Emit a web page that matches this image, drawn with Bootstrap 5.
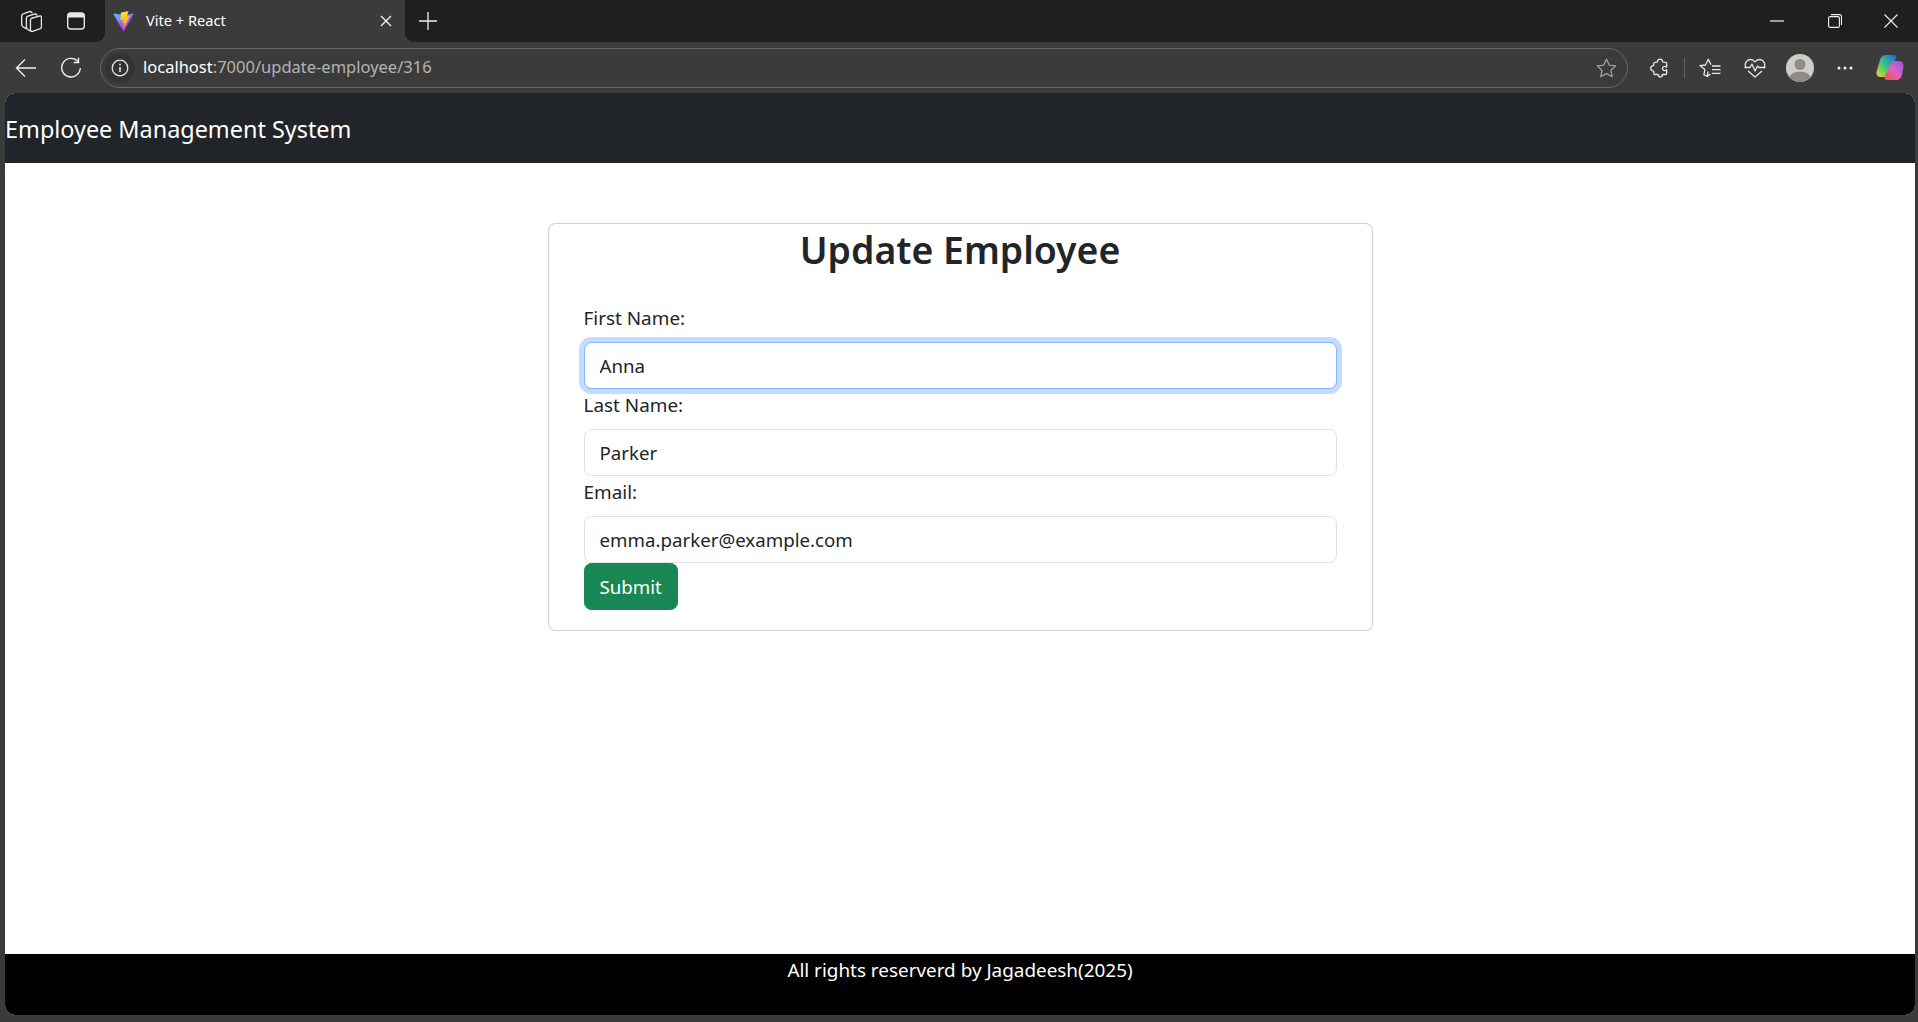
<!DOCTYPE html>
<html lang="en">
  <head>
    <meta charset="UTF-8" />
    <meta name="viewport" content="width=device-width, initial-scale=1.0" />
    <title>Vite + React</title>
    <link rel="stylesheet" href="https://cdn.jsdelivr.net/npm/bootstrap@5.3.2/dist/css/bootstrap.min.css" />
    <style>
      html { font-size: 20px; height: 100%; }
      body {
        --bs-body-font-size: 18.9px;
        font-family: "Noto Sans", "Open Sans", sans-serif;
        line-height: 30px;
        background: #3b3b3b;
        height: 100%;
        overflow: hidden;
      }

      /* browser window */
      .tab-strip { height: 42px; background: #3b3b3b; line-height: 1.5; }
      .strip-left { width: 105px; padding-left: 8px; background: #1f1f1f; border-bottom-right-radius: 9px; }
      .strip-right { background: #1f1f1f; border-bottom-left-radius: 9px; }
      .browser-tab { width: 300px; padding-left: 8px; background: #3b3b3b; border-radius: 9px 9px 0 0; color: #fff; font-size: 14.6px; }
      .tab-title { margin-left: 12px; }
      .tab-close { margin-right: 13px; }
      .slot { width: 45px; height: 42px; flex: none; }
      .win-slot { width: 58px; height: 40px; flex: none; }
      .win-slot-end { width: 54px; }
      .tool-bar { height: 51px; background: #3b3b3b; padding: 0 6px 0 3px; line-height: 1.5; }
      .address-bar {
        height: 40px;
        margin: 0 9px 0 7px;
        border: 1.5px solid #696969;
        border-radius: 20px;
        font-size: 16.5px;
        color: #fff;
      }
      .info-slot { width: 30px; height: 30px; margin-left: 4px; background: #333; border-radius: 50%; flex: none; }
      .url-text { margin-left: 8px; }
      .url-rest { color: #b4b4b4; }
      .tool-sep { width: 1px; height: 20px; background: #636363; flex: none; margin: 0 2px; }

      /* page */
      .page-frame { margin: 0 3px 7px 5px; border-radius: 10px; overflow: hidden; background: #fff; min-height: 0; }
      .brand-flush { margin-left: 0; font-size: 23.4px; line-height: 37.5px; padding-top: 8px; padding-bottom: 4.5px; }
      .navbar-flush { padding-left: 0; padding-right: 0; }
      .wide-box { max-width: 1650px; }
      .card-top { margin-top: 60px; }
      .form-title { font-size: 37.4px; font-weight: 600; line-height: 48px; padding-top: 2px; margin-bottom: 8px; }
      .form-label { padding-top: 1px; margin-bottom: 9px; }
      .form-control, .btn { font-size: 18.7px; line-height: 30px; }
      .form-control { padding-top: 8px; padding-bottom: 7px; }
      .page-foot { height: 61px; padding-top: 1px; background: #000; flex: none; }
      .form-control.focus-look {
        border-color: #86b7fe;
        box-shadow: 0 0 0 .25rem rgba(13, 110, 253, .25);
      }
    </style>
  </head>
  <body class="d-flex flex-column">
    <!-- tabs -->
    <div class="tab-strip d-flex flex-shrink-0">
      <div class="strip-left d-flex align-items-center">
        <div class="slot d-flex align-items-center justify-content-center">
          <svg width="22" height="22" viewBox="0 0 20 20" fill="none" stroke="#e8e8e8" stroke-width="1.200" stroke-linejoin="round" stroke-linecap="round"><path d="M9.500 9Q9.500 8 10.500 7.500L17.500 5.500Q19.500 5 19.500 6.500V15.500Q19.500 16.500 18.500 17L12 19.300Q9.500 19.800 9.500 18Z"/><path d="M9.500 19 7.500 18Q5.800 17 5.800 15.500V7.500Q5.800 6 7.300 5.500L13 3.700Q14.500 3.300 15.500 4.700"/><path d="M6 17 3 15.500Q1.500 14.500 1.500 13V5.500Q1.500 4 3 3.500L8.500 1.500Q10 1 11 2.500"/></svg>
        </div>
        <div class="slot d-flex align-items-center justify-content-center">
          <svg width="20" height="20" viewBox="0 0 20 20"><rect x="1.700" y="2" width="16.600" height="16" rx="3" fill="none" stroke="#e8e8e8" stroke-width="1.400"/><path d="M2 6.500V5a3 3 0 0 1 3-3h10a3 3 0 0 1 3 3v1.500z" fill="#e8e8e8"/></svg>
        </div>
      </div>
      <div class="browser-tab d-flex align-items-center">
        <svg width="21" height="21" viewBox="0 0 410 404" fill="none">
          <path d="M399.641 59.5246L215.643 388.545C211.844 395.338 202.084 395.378 198.228 388.618L10.5817 59.5563C6.38087 52.1896 12.6802 43.2665 21.0281 44.7586L205.223 77.6824C206.398 77.8924 207.601 77.8904 208.776 77.6763L389.119 44.8058C397.439 43.2894 403.768 52.1434 399.641 59.5246Z" fill="url(#viteA)"/>
          <path d="M292.965 1.5744L156.801 28.2552C154.563 28.6937 152.906 30.5903 152.771 32.8664L144.395 174.33C144.198 177.662 147.258 180.248 150.51 179.498L188.42 170.749C191.967 169.931 195.172 173.055 194.443 176.622L183.18 231.775C182.422 235.487 185.907 238.661 189.532 237.56L212.947 230.446C216.577 229.344 220.065 232.527 219.297 236.242L201.398 322.875C200.278 328.294 207.486 331.249 210.492 326.603L212.5 323.5L323.454 102.072C325.312 98.3645 322.108 94.137 318.036 94.9228L279.014 102.454C275.347 103.161 272.227 99.746 273.262 96.1583L298.731 7.86689C299.767 4.27314 296.636 0.855181 292.965 1.5744Z" fill="url(#viteB)"/>
          <defs>
            <linearGradient id="viteA" x1="6" y1="33" x2="235" y2="344" gradientUnits="userSpaceOnUse"><stop stop-color="#41D1FF"/><stop offset="1" stop-color="#BD34FE"/></linearGradient>
            <linearGradient id="viteB" x1="194" y1="8" x2="236" y2="293" gradientUnits="userSpaceOnUse"><stop stop-color="#FFEA83"/><stop offset=".08" stop-color="#FFDD35"/><stop offset="1" stop-color="#FFA800"/></linearGradient>
          </defs>
        </svg>
        <span class="tab-title flex-grow-1">Vite + React</span>
        <svg class="tab-close" width="12" height="12" viewBox="0 0 12 12" stroke="#f0f0f0" stroke-width="1.400"><path d="M1 1l10 10M11 1L1 11"/></svg>
      </div>
      <div class="strip-right flex-grow-1 d-flex align-items-center">
        <div class="slot d-flex align-items-center justify-content-center">
          <svg width="20" height="20" viewBox="0 0 20 20" stroke="#f0f0f0" stroke-width="1.300"><path d="M10 1v18M1 10h18"/></svg>
        </div>
        <div class="ms-auto d-flex">
          <div class="win-slot d-flex align-items-center justify-content-center">
            <svg width="14" height="2" viewBox="0 0 14 2" stroke="#f0f0f0" stroke-width="1.200"><path d="M0 1h14"/></svg>
          </div>
          <div class="win-slot d-flex align-items-center justify-content-center">
            <svg width="14" height="14" viewBox="0 0 14 14" fill="none" stroke="#f0f0f0" stroke-width="1.100"><rect x=".6" y="2.600" width="10.800" height="10.800" rx="1.500"/><path d="M3 .6h8.500a2 2 0 0 1 2 2V11"/></svg>
          </div>
          <div class="win-slot win-slot-end d-flex align-items-center justify-content-center">
            <svg width="14" height="14" viewBox="0 0 14 14" stroke="#f0f0f0" stroke-width="1.100"><path d="M.5.5l13 13M13.500.5l-13 13"/></svg>
          </div>
        </div>
      </div>
    </div>

    <!-- address bar and tools -->
    <div class="tool-bar d-flex align-items-center flex-shrink-0">
      <div class="slot d-flex align-items-center justify-content-center">
        <svg width="22" height="20" viewBox="0 0 22 20" fill="none" stroke="#f0f0f0" stroke-width="1.400"><path d="M21 10H1.500M10 1.500 1.500 10l8.500 8.500"/></svg>
      </div>
      <div class="slot d-flex align-items-center justify-content-center">
        <svg width="22" height="22" viewBox="0 0 22 22" fill="none" stroke="#f0f0f0" stroke-width="1.400"><path d="M18 4.500A9.300 9.300 0 1 0 20.300 11"/><path d="M18.500 .8v4.700h-4.700"/></svg>
      </div>
      <div class="address-bar flex-grow-1 d-flex align-items-center">
        <div class="info-slot d-flex align-items-center justify-content-center">
          <svg width="18" height="18" viewBox="0 0 18 18" fill="none" stroke="#e8e8e8" stroke-width="1.300"><circle cx="9" cy="9" r="7.800"/><path d="M9 8v5" stroke-width="1.600"/><circle cx="9" cy="5.500" r=".9" fill="#e8e8e8" stroke="none"/></svg>
        </div>
        <span class="url-text flex-grow-1">localhost<span class="url-rest">:7000/update-employee/316</span></span>
        <svg class="me-2" width="21" height="20" viewBox="0 0 21 20" fill="none" stroke="#a0a0a0" stroke-width="1.300" stroke-linejoin="round"><path d="M10.500 1.200l2.800 5.900 6.400.8-4.700 4.400 1.200 6.400-5.700-3.100-5.700 3.100 1.200-6.400L1.300 7.900l6.400-.8z"/></svg>
      </div>
      <div class="slot d-flex align-items-center justify-content-center">
        <svg width="20" height="20" viewBox="0 0 20 20" fill="none" stroke="#e8e8e8" stroke-width="1.300" stroke-linejoin="round"><path d="M7.500 3.500c0-3.300 5-3.300 5 0 0 .4 0 .8 3 .8.800 0 1.200.5 1.200 1.200v3c0 .6-.3.8-.7.500-2-1.500-4 .2-3.300 2.200.5 1.500 2.500 2 3.300.8.300-.4.700-.2.700.5v2.800c0 .8-.5 1.200-1.200 1.200h-3c-.5 0-.6.400-.4.800.8 1.800-3.100 2.700-3.600.2 0-.5-.3-1-.8-1H5c-.8 0-1.200-.4-1.200-1.200v-1.700c0-.6-.4-.8-1-.8-2.700-.4-2.700-4.700 0-5 .6 0 1-.2 1-.8V5.500c0-.8.400-1.200 1.200-1.200 1.500 0 2.500 0 2.500-.8z"/></svg>
      </div>
      <div class="tool-sep"></div>
      <div class="slot d-flex align-items-center justify-content-center">
        <svg width="22" height="20" viewBox="0 0 22 20" fill="none" stroke="#e8e8e8" stroke-width="1.300" stroke-linejoin="round"><path d="M9 13.500l-.8 5L5 16.700l-.1.100 1-5.300L1 7.700l5.500-.7L9.300 1.200 12 6.800"/><path d="M8.200 18.500l3.300-2.500M13 8h8.500M13 11.700h8.500M13 15.400h8.500"/></svg>
      </div>
      <div class="slot d-flex align-items-center justify-content-center">
        <svg width="22" height="20" viewBox="0 0 22 20" fill="none" stroke="#e8e8e8" stroke-width="1.300" stroke-linejoin="round"><path d="M2.200 10C-.5 5.500 3 1.500 6.500 1.500c2 0 3.500 1 4.500 2.500 1-1.500 2.500-2.500 4.500-2.500 3.500 0 7 4 4.300 8.500"/><path d="M4 13l7 6 7-6"/><path d="M.5 9.500H6l2-3.500 3 7 2.500-5 1.500 1.500h6.500"/></svg>
      </div>
      <div class="slot d-flex align-items-center justify-content-center">
        <svg width="28" height="28" viewBox="0 0 28 28"><circle cx="14" cy="14" r="14" fill="#cfcdc9"/><circle cx="14" cy="10.500" r="5.500" fill="#8f8b87"/><path d="M3.500 23.200C5 19.500 9 17.800 14 17.800s9 1.700 10.500 5.400A14 14 0 0 1 14 28a14 14 0 0 1-10.500-4.800z" fill="#8f8b87"/></svg>
      </div>
      <div class="slot d-flex align-items-center justify-content-center">
        <svg width="16" height="4" viewBox="0 0 16 4" fill="#f0f0f0"><circle cx="2" cy="2" r="1.500"/><circle cx="8" cy="2" r="1.500"/><circle cx="14" cy="2" r="1.500"/></svg>
      </div>
      <div class="slot d-flex align-items-center justify-content-center">
        <svg width="28" height="27" viewBox="0 0 28 27">
          <defs>
            <linearGradient id="copA" x1="0" y1="1" x2="1" y2="0"><stop offset="0" stop-color="#f5d327"/><stop offset=".45" stop-color="#3fc97c"/><stop offset="1" stop-color="#1a63e8"/></linearGradient>
            <linearGradient id="copB" x1="0" y1="1" x2="1" y2="0"><stop offset="0" stop-color="#f5553f"/><stop offset=".5" stop-color="#e35ec4"/><stop offset="1" stop-color="#8a5bea"/></linearGradient>
          </defs>
          <path d="M10 1h8c2 0 2.500 2 2 3l-6 16c-.7 2-2.500 3-4.500 3H5c-3 0-5-2-4.500-5L4 6c.6-3 3-5 6-5z" fill="url(#copA)"/>
          <path d="M17 7h6c3 0 5 2.500 4.500 5.500l-1.500 8c-.5 3.500-3 5.500-6 5.500h-9c-2 0-3-1.500-2.300-3.200L15 9c.4-1.200 1-2 2-2z" fill="url(#copB)"/>
        </svg>
      </div>
    </div>

    <!-- page -->
    <div class="page-frame flex-grow-1 d-flex flex-column">
      <nav class="navbar navbar-dark bg-dark navbar-flush flex-shrink-0">
        <a class="navbar-brand brand-flush" href="#">Employee Management System</a>
      </nav>

      <div class="flex-grow-1">
        <div class="container wide-box">
          <div class="row">
            <div class="card card-top col-md-6 offset-md-3">
              <h2 class="text-center form-title">Update Employee</h2>
              <div class="card-body">
                <form>
                  <div>
                    <label class="form-label">First Name:</label>
                    <input class="form-control focus-look" type="text" value="Anna" />
                  </div>
                  <div>
                    <label class="form-label">Last Name:</label>
                    <input class="form-control" type="text" value="Parker" />
                  </div>
                  <div>
                    <label class="form-label">Email:</label>
                    <input class="form-control" type="email" value="emma.parker@example.com" />
                  </div>
                  <button type="button" class="btn btn-success">Submit</button>
                </form>
              </div>
            </div>
          </div>
        </div>
      </div>

      <footer class="page-foot text-white text-center">All rights reserverd by Jagadeesh(2025)</footer>
    </div>

    <script src="https://cdn.jsdelivr.net/npm/bootstrap@5.3.2/dist/js/bootstrap.bundle.min.js"></script>
  </body>
</html>
